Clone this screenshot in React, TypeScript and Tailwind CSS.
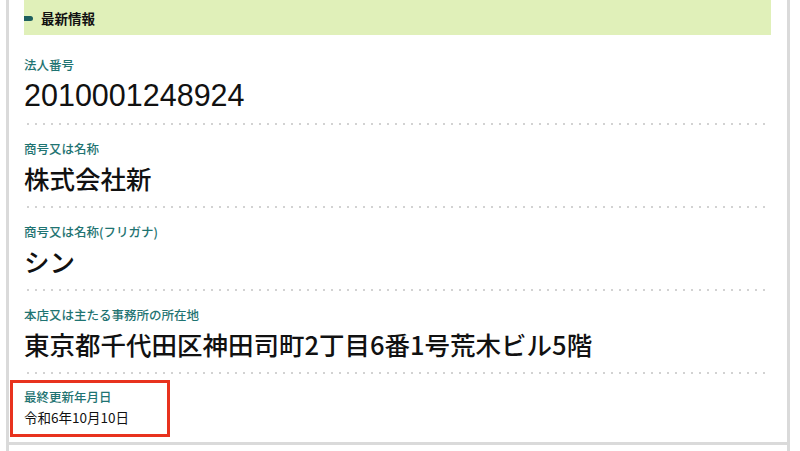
import React from "react";

const jp = { fontFamily: '"Noto Sans CJK JP", "Noto Sans", sans-serif' };

function Dotted() {
  return (
    <div className="h-[2px] w-full bg-[radial-gradient(circle,#d2d2d2_1px,transparent_1.4px)] bg-[length:8px_2px] bg-repeat-x" />
  );
}

function Item({ label, value }: { label: string; value: string }) {
  return (
    <div className="flex flex-col pt-[16px] pb-[12px] gap-[5px]">
      <div className="text-[12.5px] leading-[16px] font-medium text-[#1f7472]">{label}</div>
      <div className="text-[25.5px] leading-[32px] font-medium text-[#111]">{value}</div>
    </div>
  );
}

export default function App() {
  return (
    <div className="w-[800px] h-[451px] bg-white overflow-hidden" style={jp}>
      <div className="ml-[6px] w-[784px] h-[480px] border-x-[3px] border-[#dadada]">
        <div className="pl-[15px] pr-[16px] border-b-[3px] border-[#dadada]">
          <div className="h-[35px] bg-[#e0f0b9] flex items-center">
            <div className="w-[9px] h-[5px] bg-[#1e5f5e] rounded-r-full mt-[1px]" />
            <div className="ml-[8px] text-[13.5px] font-bold text-[#111] mt-[1px]">最新情報</div>
          </div>
          <div className="flex flex-col pt-[22px] pb-[12px] gap-[6px]">
            <div className="text-[12.5px] leading-[16px] font-medium text-[#1f7472]">法人番号</div>
            <div
              className="text-[30.5px] leading-[32px] text-[#111]"
              style={{ fontFamily: '"Liberation Sans", Arial, sans-serif' }}
            >
              2010001248924
            </div>
          </div>
          <Dotted />
          <Item label="商号又は名称" value="株式会社新" />
          <Dotted />
          <Item label="商号又は名称(フリガナ)" value="シン" />
          <Dotted />
          <Item label="本店又は主たる事務所の所在地" value="東京都千代田区神田司町2丁目6番1号荒木ビル5階" />
          <Dotted />
          <div className="mt-[6px] mb-[5px] -ml-[14px] w-[160px] border-[3px] border-[#e8321e] pl-[11px] pt-[6px] pb-[9px] flex flex-col gap-[4px]">
            <div className="text-[12.5px] leading-[16px] font-medium text-[#1f7472]">最終更新年月日</div>
            <div className="text-[13.5px] leading-[16px] text-[#111]">令和6年10月10日</div>
          </div>
        </div>
      </div>
    </div>
  );
}
